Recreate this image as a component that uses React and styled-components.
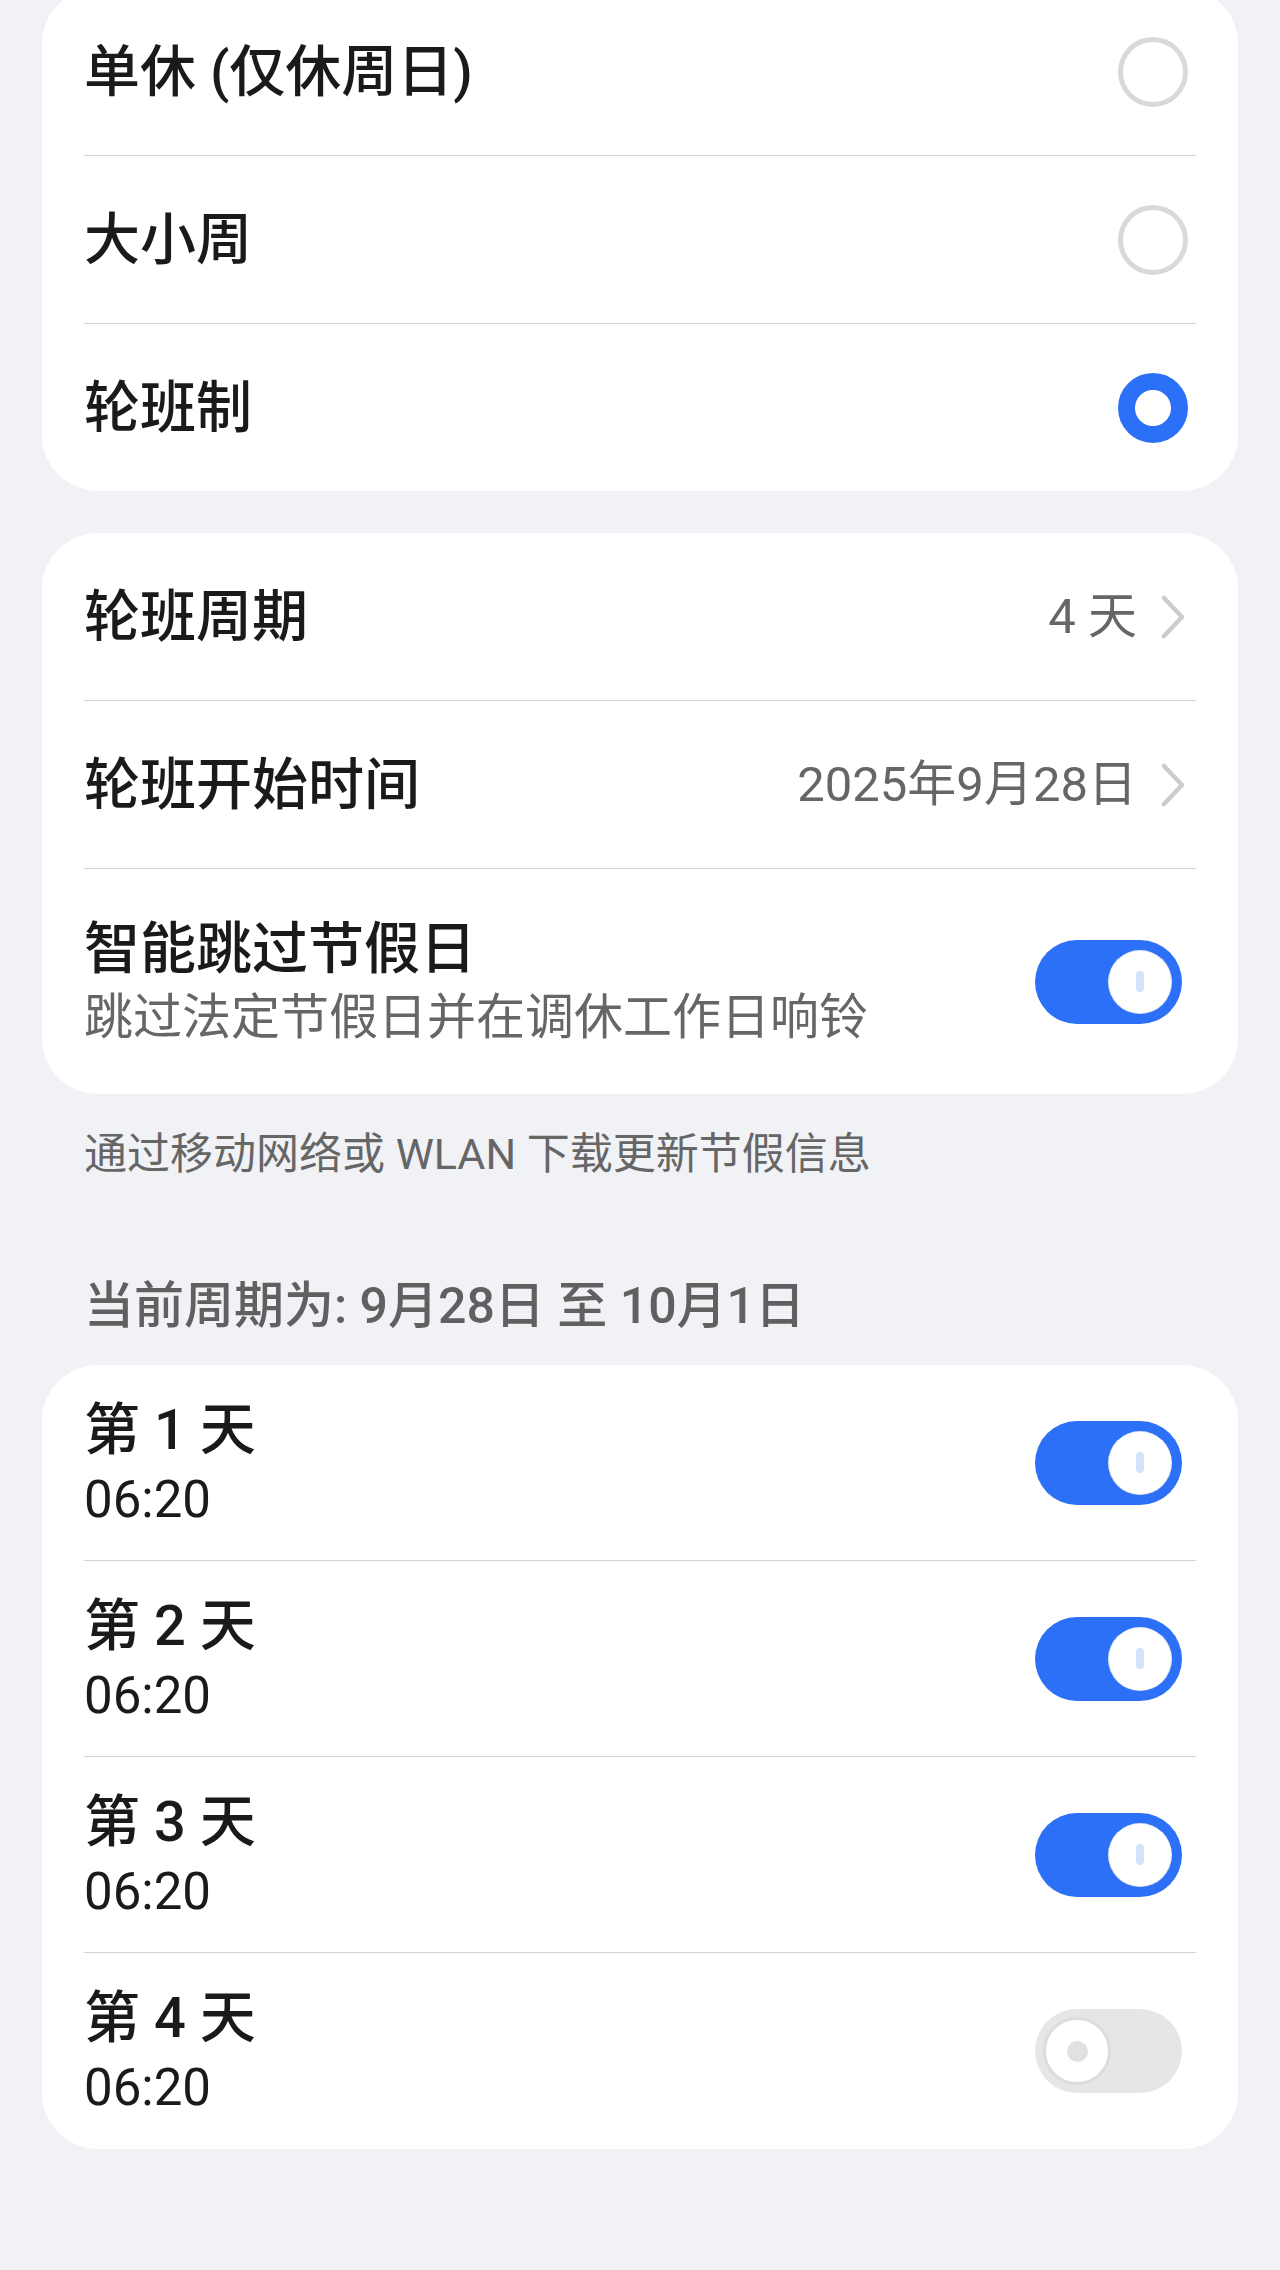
import React from 'react'
import styled, { createGlobalStyle } from 'styled-components'

const GlobalStyle = createGlobalStyle`
  html, body {
    margin: 0;
    padding: 0;
    background: #f1f2f6;
  }
  body {
    font-family: Roboto, "Noto Sans CJK SC", sans-serif;
    color: #1a1a1a;
  }
`

const Page = styled.div`
  width: 1280px;
  min-height: 2270px;
  padding: 0 42px;
  box-sizing: border-box;
  background: #f1f2f6;
  overflow: hidden;
`

const Card = styled.div`
  margin-top: ${p => p.$top}px;
  background: #ffffff;
  border-radius: 56px;
  overflow: hidden;
`

const Row = styled.div`
  display: flex;
  align-items: center;
  justify-content: space-between;
  height: ${p => p.$height || 167}px;
  padding: 0 ${p => p.$right || 50}px 0 42px;
  box-sizing: border-box;
`

const Divider = styled.div`
  height: 1px;
  margin: 0 42px;
  background: #d3d3d3;
`

const TextBlock = styled.div`
  display: flex;
  flex-direction: column;
  gap: ${p => p.$gap || 0}px;
`

const Label = styled.div`
  font-size: 56px;
  line-height: 70px;
  font-weight: 500;
  color: #1a1a1a;
  white-space: pre;
`

const SubText = styled.div`
  font-size: 49px;
  line-height: 64px;
  color: #666666;
`

const Time = styled.div`
  font-size: 51px;
  line-height: 62px;
  color: #1a1a1a;
`

const ValueWrap = styled.div`
  display: flex;
  align-items: center;
  gap: 24px;
`

const Value = styled.span`
  font-size: 49px;
  line-height: 64px;
  color: #666666;
  white-space: pre;
`

const Radio = styled.span`
  width: 70px;
  height: 70px;
  border-radius: 50%;
  box-sizing: border-box;
  border: ${p => (p.$checked ? '17px solid #2b70f6' : '5px solid #d9d9d9')};
  background: #ffffff;
`

const Track = styled.div`
  display: flex;
  align-items: center;
  justify-content: ${p => (p.$on ? 'flex-end' : 'flex-start')};
  width: 147px;
  height: 84px;
  padding: 0 ${p => (p.$on ? 10 : 8)}px;
  box-sizing: border-box;
  border-radius: 42px;
  background: ${p => (p.$on ? '#2b70f6' : '#e6e6e6')};
`

const Knob = styled.div`
  display: flex;
  align-items: center;
  justify-content: center;
  width: ${p => (p.$on ? 64 : 68)}px;
  height: ${p => (p.$on ? 64 : 68)}px;
  box-sizing: border-box;
  border-radius: 50%;
  background: #ffffff;
  border: ${p => (p.$on ? '1px solid rgba(20, 60, 160, 0.12)' : '3px solid #dcdcdc')};
`

const KnobBar = styled.span`
  width: 8px;
  height: 21px;
  border-radius: 4px;
  background: #d4e2fc;
`

const KnobDot = styled.span`
  width: 21px;
  height: 21px;
  border-radius: 50%;
  background: #e1e1e1;
`

const Footnote = styled.div`
  margin-top: 32px;
  padding-left: 42px;
  font-size: 43px;
  line-height: 56px;
  color: #666666;
`

const SectionHeader = styled.div`
  margin-top: 92px;
  padding-left: 42px;
  font-size: 50px;
  line-height: 64px;
  font-weight: 500;
  color: #606060;
`

const Chevron = () => (
  <svg width="25" height="44" viewBox="0 0 25 44" fill="none">
    <polyline points="3,3 21,22 3,41" stroke="#cccccc" strokeWidth="4.5" strokeLinecap="round" strokeLinejoin="round" />
  </svg>
)

const Switch = ({ on }) => (
  <Track $on={on}>
    <Knob $on={on}>{on ? <KnobBar /> : <KnobDot />}</Knob>
  </Track>
)

const modes = [
  { label: '单休 (仅休周日)', checked: false },
  { label: '大小周', checked: false },
  { label: '轮班制', checked: true },
]

const days = [
  { label: '第 1 天', time: '06:20', on: true },
  { label: '第 2 天', time: '06:20', on: true },
  { label: '第 3 天', time: '06:20', on: true },
  { label: '第 4 天', time: '06:20', on: false },
]

const App = () => (
  <Page>
    <GlobalStyle />

    <Card $top={-12}>
      {modes.map((m, i) => (
        <React.Fragment key={m.label}>
          {i > 0 && <Divider />}
          <Row>
            <Label>{m.label}</Label>
            <Radio $checked={m.checked} />
          </Row>
        </React.Fragment>
      ))}
    </Card>

    <Card $top={42}>
      <Row $right={52}>
        <Label>轮班周期</Label>
        <ValueWrap>
          <Value>4 天</Value>
          <Chevron />
        </ValueWrap>
      </Row>
      <Divider />
      <Row $right={52}>
        <Label>轮班开始时间</Label>
        <ValueWrap>
          <Value>2025年9月28日</Value>
          <Chevron />
        </ValueWrap>
      </Row>
      <Divider />
      <Row $height={225} $right={56}>
        <TextBlock $gap={2}>
          <Label>智能跳过节假日</Label>
          <SubText>跳过法定节假日并在调休工作日响铃</SubText>
        </TextBlock>
        <Switch on />
      </Row>
    </Card>

    <Footnote>通过移动网络或 WLAN 下载更新节假信息</Footnote>

    <SectionHeader>当前周期为: 9月28日 至 10月1日</SectionHeader>

    <Card $top={27}>
      {days.map((d, i) => (
        <React.Fragment key={d.label}>
          {i > 0 && <Divider />}
          <Row $height={i === days.length - 1 ? 196 : 195} $right={56}>
            <TextBlock $gap={4}>
              <Label>{d.label}</Label>
              <Time>{d.time}</Time>
            </TextBlock>
            <Switch on={d.on} />
          </Row>
        </React.Fragment>
      ))}
    </Card>
  </Page>
)

export default App
